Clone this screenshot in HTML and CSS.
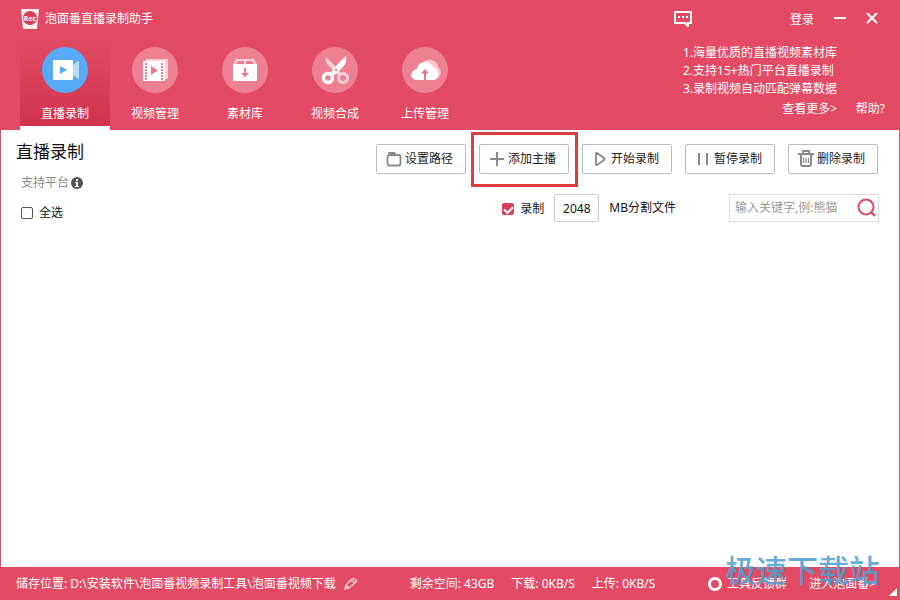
FILE: index.html
```html
<!DOCTYPE html>
<html lang="zh-CN">
<head>
	<meta charset="UTF-8">
	<meta name="viewport" content="width=device-width,initial-scale=1">
	<title>泡面番直播录制助手</title>
	<link rel="stylesheet" href="styles.css">
</head>
<body>
	<header class="header">
		<div class="header-left">
			<div class="brand">
				<svg class="logo" width="18" height="20" viewBox="0 0 18 20">
					<path d="M0 0h18l-2 20H2z" fill="#fdeeee"/>
					<circle cx="9" cy="9" r="7" fill="#d8405a"/>
					<text x="9" y="12" text-anchor="middle" class="logo-text">Rec</text>
				</svg>
				<h1>泡面番直播录制助手</h1>
			</div>
			<nav class="nav">
				<a class="nav-item active" href="#">
					<svg width="46" height="46" viewBox="0 0 46 46">
						<circle cx="23" cy="23" r="23" fill="#57aaf5"/>
						<path d="M31 18l5-4h1v18h-1l-5-4z" fill="#b9dcfb"/>
						<rect x="11" y="13" width="20" height="20" rx="1" fill="#fff"/>
						<path d="M18 19l7 4-7 4z" fill="#57aaf5"/>
					</svg>
					<span>直播录制</span>
				</a>
				<a class="nav-item" href="#">
					<svg width="46" height="46" viewBox="0 0 46 46">
						<circle cx="23" cy="23" r="23" fill="#ee8093"/>
						<path d="M13 14l1-2h21q1 0 1 1v19h-3V14z" fill="#fbd0d7"/>
						<rect x="11" y="14" width="22" height="20" rx="1" fill="#fff"/>
						<path d="M14 16v17M30 16v17" stroke="#e87c90" stroke-width="2" stroke-dasharray="2 1"/>
						<path d="M19 19l7 4.500-7 4.500z" fill="#e6788c"/>
					</svg>
					<span>视频管理</span>
				</a>
				<a class="nav-item" href="#">
					<svg width="46" height="46" viewBox="0 0 46 46">
						<circle cx="23" cy="23" r="23" fill="#ee8093"/>
						<path d="M11 18l3-6h18l3 6z" fill="#fbd0d7"/>
						<path d="M14 17l2-3h6v3zM24 17v-3h6l2 3z" fill="#e87c90"/>
						<rect x="11" y="17" width="24" height="17" rx="1" fill="#fff"/>
						<path d="M22 21h2v5h3l-4 4-4-4h3z" fill="#e6788c"/>
					</svg>
					<span>素材库</span>
				</a>
				<a class="nav-item" href="#">
					<svg width="46" height="46" viewBox="0 0 46 46">
						<circle cx="23" cy="23" r="23" fill="#ee8093"/>
						<path d="M14 10l10 10 5 6-3 2-8-8c-4-4-5-7-4-10z" fill="#fbd0d7"/>
						<circle cx="31" cy="31" r="4.500" fill="none" stroke="#fbd0d7" stroke-width="3"/>
						<path d="M34 9c1 4 0 7-3 11l-8 8-5-2 7-8z" fill="#fff"/>
						<circle cx="16" cy="31" r="4.500" fill="none" stroke="#fff" stroke-width="3.500"/>
						<circle cx="24" cy="23" r="1.200" fill="#e6788c"/>
					</svg>
					<span>视频合成</span>
				</a>
				<a class="nav-item" href="#">
					<svg width="46" height="46" viewBox="0 0 46 46">
						<circle cx="23" cy="23" r="23" fill="#ee8093"/>
						<path d="M20 17c3-6 15-6 16 3 5 4 3 10-3 13z" fill="#fbc6ce"/>
						<path d="M14 33c-6-1-7-9 1-11 1-8 13-10 16-2 7 2 7 12 1 13z" fill="#fff"/>
						<path d="M23 22l4 4.500h-3V33h-2v-6.500h-3z" fill="#e6788c"/>
					</svg>
					<span>上传管理</span>
				</a>
			</nav>
		</div>
		<div class="header-right">
			<div class="window-bar">
				<button class="icon-btn chat" type="button" aria-label="消息">
					<svg width="18" height="16" viewBox="0 0 18 16">
						<path d="M1 1h16v11h-3v3l-3-3H1z" fill="none" stroke="#fff" stroke-width="2" stroke-linejoin="round"/>
						<path d="M4 6h2M8 6h2M12 6h2" stroke="#fff" stroke-width="2"/>
					</svg>
				</button>
				<a class="login" href="#">登录</a>
				<button class="icon-btn" type="button" aria-label="最小化">
					<svg width="12" height="12" viewBox="0 0 12 12"><path d="M0 5h12" stroke="#fff" stroke-width="2"/></svg>
				</button>
				<button class="icon-btn" type="button" aria-label="关闭">
					<svg width="12" height="12" viewBox="0 0 12 12"><path d="M1 0l10 10M11 0L1 10" stroke="#fff" stroke-width="2"/></svg>
				</button>
			</div>
			<div class="info">
				<div class="notes">
					<p>1.海量优质的直播视频素材库</p>
					<p>2.支持15+热门平台直播录制</p>
					<p>3.录制视频自动匹配弹幕数据</p>
					<a class="more" href="#">查看更多&gt;</a>
				</div>
				<a class="help" href="#">帮助?</a>
			</div>
		</div>
	</header>

	<main class="main">
		<div class="side">
			<h2>直播录制</h2>
			<div class="platform">
				<span>支持平台</span>
				<svg width="12" height="12" viewBox="0 0 12 12">
					<circle cx="6" cy="6" r="6" fill="#555"/>
					<path d="M5 2h2v2H5zM4 5h3v4h1v1H4V9h1V6H4z" fill="#fff"/>
				</svg>
			</div>
			<label class="check"><input type="checkbox">全选</label>
		</div>
		<div class="tools">
			<div class="buttons">
				<button class="btn" type="button">
					<svg width="16" height="16" viewBox="0 0 16 16"><path d="M3.500 4h9A2 2 0 0 1 14.500 6v6.500a2 2 0 0 1-2 2h-9a2 2 0 0 1-2-2V6a2 2 0 0 1 2-2zM3 4V2h5.500v2" fill="none" stroke="#888" stroke-width="1.800"/></svg>
					设置路径
				</button>
				<div class="marked">
					<button class="btn" type="button">
						<svg width="16" height="16" viewBox="0 0 16 16"><path d="M1 8h14M8 1v14" stroke="#888" stroke-width="2"/></svg>
						添加主播
					</button>
				</div>
				<button class="btn" type="button">
					<svg width="16" height="16" viewBox="0 0 16 16"><path d="M4 2.500v11q0 1 1 .5l7-5q1-1 0-2L5 2q-1-.5-1 .5z" fill="none" stroke="#888" stroke-width="1.800"/></svg>
					开始录制
				</button>
				<button class="btn" type="button">
					<svg width="16" height="16" viewBox="0 0 16 16"><path d="M4 2v12M12 2v12" stroke="#888" stroke-width="2"/></svg>
					暂停录制
				</button>
				<button class="btn" type="button">
					<svg width="16" height="18" viewBox="0 0 16 18"><path d="M0 4h16M5 4V1h6v3M3 5v9q0 2 2 2h6q2 0 2-2V5" fill="none" stroke="#888" stroke-width="2"/><path d="M5.500 8v5M8 8v5M10.500 8v5" stroke="#888" stroke-width="1.200"/></svg>
					删除录制
				</button>
			</div>
			<div class="options">
				<label class="check record"><input type="checkbox" checked><span>录制</span></label>
				<input class="size" id="size" type="text" value="2048">
				<label for="size">MB分割文件</label>
				<div class="search">
					<input type="text" placeholder="输入关键字,例:熊猫" aria-label="搜索">
					<button class="icon-btn" type="button" aria-label="搜索">
						<svg width="20" height="20" viewBox="0 0 20 20"><circle cx="9" cy="9" r="7.500" fill="none" stroke="#dc4a64" stroke-width="2"/><path d="M14 14l4 4" stroke="#dc4a64" stroke-width="2.400"/></svg>
					</button>
				</div>
			</div>
		</div>
	</main>

	<footer class="footer">
		<div class="path">
			<span>储存位置: D:\安装软件\泡面番视频录制工具\泡面番视频下载</span>
			<button class="icon-btn" type="button" aria-label="修改">
				<svg width="14" height="14" viewBox="0 0 14 14"><path d="M1 12l1-4 6-6q1-1 2 0l2 1q1 1 0 2l-7 6zM7 3l4 3M2 8l3 3" fill="none" stroke="#fbd9de" stroke-width="1.300"/></svg>
			</button>
		</div>
		<div class="status">
			<span>剩余空间: 43GB</span>
			<span>下载: 0KB/S</span>
			<span>上传: 0KB/S</span>
		</div>
		<div class="links">
			<a href="#">
				<svg width="14" height="14" viewBox="0 0 14 14"><ellipse cx="7" cy="7" rx="5.500" ry="5.500" fill="none" stroke="#fff" stroke-width="3"/></svg>
				工具反馈群
			</a>
			<a href="#">进入泡面番&gt;</a>
		</div>
		<div class="watermark">极速下载站</div>
		<div class="grip"></div>
	</footer>
</body>
</html>
```
FILE: styles.css
```css
*{
	padding: 0;
	margin: 0;
	box-sizing: border-box;
}
body{
	min-height: 100vh;
	display: flex;
	flex-direction: column;
	font: 12px/18px "Noto Sans","Noto Sans CJK SC",sans-serif;
	color: #111;
	background: #fff;
}
a{
	color: inherit;
	text-decoration: none;
}
svg{
	display: block;
	flex: none;
}
button,input{
	font: inherit;
	color: inherit;
}
.icon-btn{
	display: block;
	border: 0;
	background: none;
}

/* 顶部 */
.header{
	display: flex;
	justify-content: space-between;
	color: #fff;
	background: #e34b64;
}
.header-left{
	padding-left: 20px;
}
.brand{
	display: flex;
	align-items: center;
	gap: 6px;
	height: 38px;
	padding-left: 1px;
}
.brand h1{
	font-size: 12px;
	font-weight: normal;
}
.logo-text{
	font-size: 7px;
	font-weight: bold;
	fill: #fff;
}
.nav{
	display: flex;
}
.nav-item{
	display: flex;
	flex-direction: column;
	align-items: center;
	gap: 12px;
	width: 90px;
	height: 92px;
	padding-top: 9px;
	border-bottom: 4px solid transparent;
}
.nav-item.active{
	background: linear-gradient(#e34b64,#d0334e);
	border-bottom-color: #fff;
}
.header-right{
	width: 227px;
	padding-right: 15px;
}
.window-bar{
	display: flex;
	align-items: center;
	height: 38px;
	padding: 0 7px 0 1px;
	gap: 20px;
}
.chat{
	margin-right: auto;
}
.login{
	padding-top: 2px;
}
.info{
	display: flex;
	justify-content: space-between;
	align-items: flex-end;
	padding: 6px 0 0 10px;
	white-space: nowrap;
}
.notes{
	display: flex;
	flex-direction: column;
}
.more{
	align-self: flex-end;
	padding-top: 2px;
}

/* 内容 */
.main{
	flex: 1;
	display: flex;
	justify-content: space-between;
	padding: 14px 20px 14px 15px;
	border: solid #d0566b;
	border-width: 0 1px;
}
.side h2{
	font-size: 17px;
	line-height: 16px;
	font-weight: normal;
}
.platform{
	display: flex;
	align-items: center;
	gap: 2px;
	padding: 14px 0 12px 5px;
	color: #888;
}
.check{
	display: flex;
	align-items: center;
	gap: 6px;
}
.check input{
	appearance: none;
	width: 12px;
	height: 12px;
	border: 1px solid #555;
	border-radius: 2px;
	background: #fff;
}
.side .check{
	padding-left: 5px;
}
.check input:checked{
	display: grid;
	place-items: center;
	border-color: #d8405a;
	background: #d8405a;
}
.check input:checked::before{
	content: "";
	width: 7px;
	height: 4px;
	border: solid #fff;
	border-width: 0 0 2px 2px;
	transform: rotate(-45deg);
}
.buttons{
	display: flex;
	gap: 13px;
	padding-right: 1px;
}
.btn{
	display: flex;
	align-items: center;
	gap: 3px;
	width: 90px;
	height: 30px;
	padding-left: 9px;
	border: 1px solid #bbb;
	border-radius: 2px;
	background: #fff;
	color: #222;
	white-space: nowrap;
}
.marked{
	position: relative;
}
.marked::after{
	content: "";
	position: absolute;
	inset: -12px -9px -13px -8px;
	border: 3px solid #e03c3f;
	pointer-events: none;
}
.options{
	display: flex;
	align-items: center;
	gap: 10px;
	height: 28px;
	margin-top: 20px;
}
.record{
	margin-left: auto;
	padding-top: 2px;
}
.size{
	width: 45px;
	height: 28px;
	border: 1px solid #ccc;
	border-radius: 2px;
	text-align: center;
}
.search{
	display: flex;
	align-items: center;
	width: 150px;
	height: 28px;
	margin-left: 43px;
	padding: 0 1px 0 5px;
	border: 1px solid #ddd;
}
.search input{
	flex: 1;
	min-width: 0;
	border: 0;
	outline: 0;
}
.search input::placeholder{
	color: #999;
}

/* 底部 */
.footer{
	position: relative;
	display: flex;
	align-items: center;
	height: 33px;
	padding: 0 24px 0 16px;
	color: #fff;
	background: #e34b64;
	white-space: nowrap;
}
.path{
	display: flex;
	align-items: center;
	gap: 8px;
}
.status{
	display: flex;
	gap: 17px;
	margin-left: 52px;
}
.links{
	display: flex;
	gap: 22px;
	margin-left: auto;
}
.links a{
	display: flex;
	align-items: center;
	gap: 5px;
}
.watermark{
	position: absolute;
	right: 20px;
	bottom: 12px;
	font-size: 31px;
	font-weight: 500;
	line-height: 36px;
	color: #4aa0d0;
	opacity: .85;
	pointer-events: none;
}
.grip{
	position: absolute;
	right: 3px;
	bottom: 4px;
	width: 8px;
	height: 8px;
	background: #fff;
	clip-path: polygon(100% 0,100% 100%,0 100%);
}
```
